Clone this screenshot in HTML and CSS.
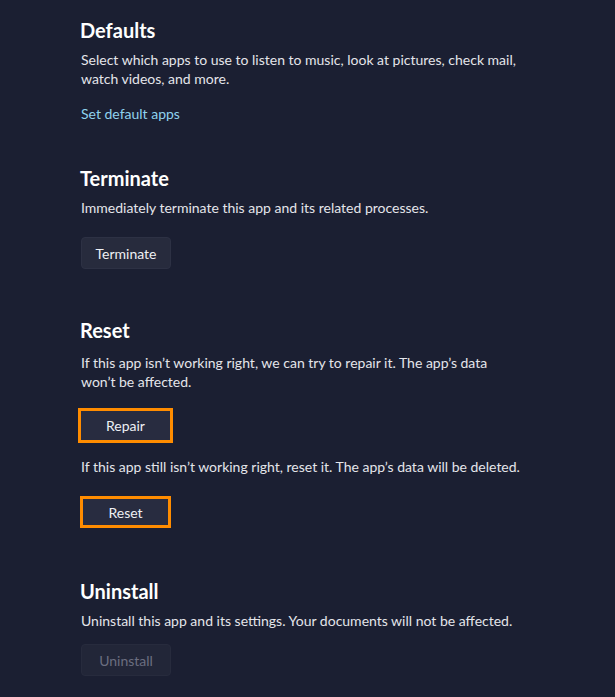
FILE: index.html
```html
<!DOCTYPE html>
<html lang="en">
<head>
<meta charset="utf-8">
<title>App settings</title>
<link rel="stylesheet" href="styles.css">
</head>
<body>
<main class="page">
  <section class="section sec-defaults">
    <h2 class="title">Defaults</h2>
    <p class="desc">Select which apps to use to listen to music, look at pictures, check mail, watch videos, and more.</p>
    <a class="link" href="#">Set default apps</a>
  </section>

  <section class="section sec-terminate">
    <h2 class="title">Terminate</h2>
    <p class="desc">Immediately terminate this app and its related processes.</p>
    <button class="btn">Terminate</button>
  </section>

  <section class="section sec-reset">
    <h2 class="title">Reset</h2>
    <p class="desc desc-wrap">If this app isn’t working right, we can try to repair it. The app’s data won’t be affected.</p>
    <button class="btn btn-mark btn-repair">Repair</button>
    <p class="desc desc-after">If this app still isn’t working right, reset it. The app’s data will be deleted.</p>
    <button class="btn btn-mark btn-reset">Reset</button>
  </section>

  <section class="section sec-uninstall">
    <h2 class="title">Uninstall</h2>
    <p class="desc">Uninstall this app and its settings. Your documents will not be affected.</p>
    <button class="btn btn-disabled" disabled>Uninstall</button>
  </section>
</main>
</body>
</html>
```

FILE: styles.css
```css
html, body {
  margin: 0;
  padding: 0;
  background: #1b1f32;
}
body {
  font-family: "Lato", "Noto Sans", "DejaVu Sans", sans-serif;
  color: #e8e9ee;
  width: 615px;
  height: 697px;
  overflow: hidden;
}
.page {
  padding: 16px 0 0 81px;
  display: flex;
  flex-direction: column;
}
.section {
  display: flex;
  flex-direction: column;
  align-items: flex-start;
}
.title {
  margin: 0 0 0 -1px;
  font-size: 20px;
  line-height: 28px;
  font-weight: 700;
  color: #ffffff;
}
.desc {
  margin: 6px 0 0 0;
  font-size: 14px;
  line-height: 19px;
  width: 443px;
  color: #e4e5ea;
}
.desc-wrap {
  margin-top: 9px;
}
.link {
  margin-top: 16px;
  font-size: 14px;
  line-height: 19px;
  color: #8fd2ee;
  text-decoration: none;
}
.btn {
  margin-top: 20px;
  box-sizing: border-box;
  width: 90px;
  height: 32px;
  padding: 0;
  font-family: inherit;
  font-size: 14px;
  color: #eef0f4;
  background: #272b3d;
  border: 1px solid #2d3144;
  border-radius: 4px;
}
.btn-mark {
  border: 3px solid #ff8c00;
  border-radius: 0;
  background: #282c40;
}
.btn-repair {
  width: 95px;
  height: 35px;
  margin-left: -3px;
  margin-top: 17px;
}
.btn-reset {
  width: 91px;
  height: 32px;
  margin-left: -1px;
  margin-top: 20px;
}
.desc-after {
  margin-top: 14px;
}
.btn-disabled {
  margin-top: 14px;
  color: #6b6e80;
  background: #222638;
  border-color: #272b3d;
}
.sec-terminate { margin-top: 41px; }
.sec-reset { margin-top: 47px; }
.sec-uninstall { margin-top: 49px; }
```
